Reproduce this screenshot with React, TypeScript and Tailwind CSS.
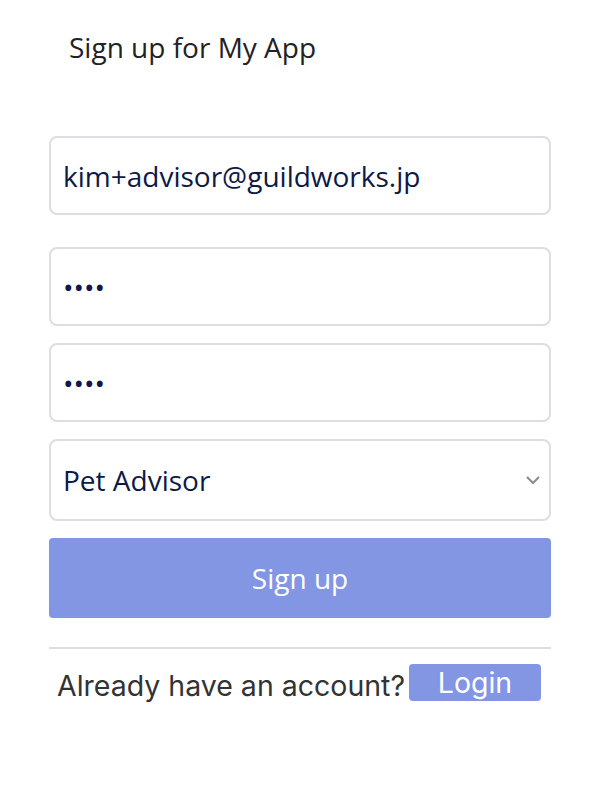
import { useState } from 'react';

const inputClass =
  'h-[79px] w-full rounded-lg border-2 border-[#dddde3] bg-white px-[12px] text-[28px] text-[#0e1a45] outline-none';

export default function App() {
  const [email, setEmail] = useState('kim+advisor@guildworks.jp');
  const [password, setPassword] = useState('1234');
  const [confirm, setConfirm] = useState('1234');
  const [role, setRole] = useState('Pet Advisor');

  return (
    <div className="min-h-[788px] w-[606px] bg-white font-['Open_Sans',sans-serif]">
      <h1 className="pl-[69px] pt-[28px] text-[28px] leading-[38px] text-[#222]">
        Sign up for My App
      </h1>
      <form
        className="ml-[49px] mt-[70px] flex w-[502px] flex-col"
        onSubmit={(e) => e.preventDefault()}
      >
        <input
          type="email"
          value={email}
          onChange={(e) => setEmail(e.target.value)}
          className={inputClass}
        />
        <input
          type="password"
          value={password}
          onChange={(e) => setPassword(e.target.value)}
          className={inputClass + ' mt-[32px]'}
        />
        <input
          type="password"
          value={confirm}
          onChange={(e) => setConfirm(e.target.value)}
          className={inputClass + ' mt-[17px]'}
        />
        <div className="relative mt-[17px]">
          <select
            value={role}
            onChange={(e) => setRole(e.target.value)}
            className="h-[82px] w-full appearance-none rounded-lg border-2 border-[#dddde3] bg-white px-[12px] text-[28px] text-[#0e1a45] outline-none"
          >
            <option>Pet Advisor</option>
            <option>Pet Owner</option>
          </select>
          <svg
            className="pointer-events-none absolute right-[10px] top-[36px]"
            width="16"
            height="10"
            viewBox="0 0 16 10"
          >
            <path
              d="M2 2 L8 8 L14 2"
              fill="none"
              stroke="#8a8a8a"
              strokeWidth="2"
            />
          </svg>
        </div>
        <button
          type="submit"
          className="mt-[17px] h-[80px] w-full rounded-[4px] bg-[#8396e4] text-[28px] text-white"
        >
          Sign up
        </button>
        <hr className="mt-[29px] border-t-2 border-[#dedede]" />
        <div className="mt-[15px] flex items-start pl-[8px] font-['Inter',sans-serif]">
          <span className="pt-[5px] text-[28.5px] leading-[34px] text-[#333]">
            Already have an account?
          </span>
          <button
            type="button"
            className="ml-[4px] h-[37px] w-[132px] rounded-[4px] bg-[#8396e4] text-[28.5px] leading-[34px] text-white"
          >
            Login
          </button>
        </div>
      </form>
    </div>
  );
}
